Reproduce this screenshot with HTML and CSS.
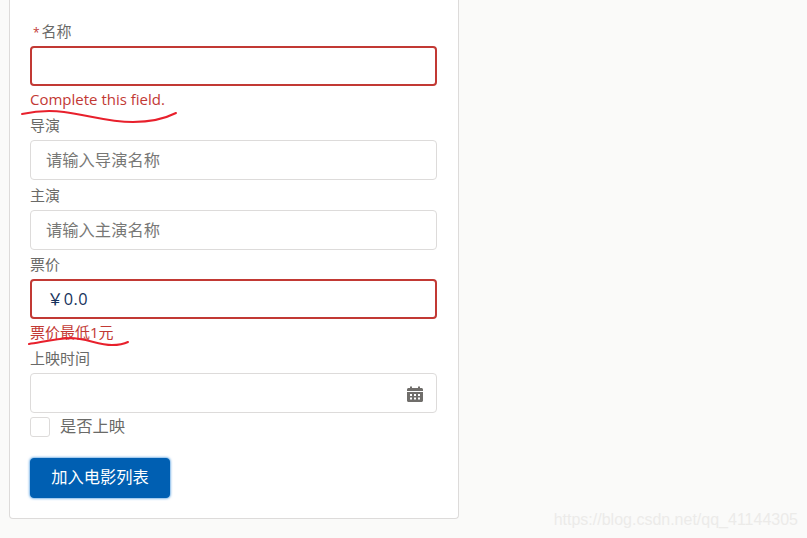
FILE: index.html

```html
<!DOCTYPE html>
<html lang="zh-CN">
<head>
    <meta charset="UTF-8">
    <title>加入电影列表</title>
    <link rel="stylesheet" href="styles.css">
</head>
<body>
    <div class="card">
        <form class="movie-form">
            <div class="field">
                <label class="field-label"><abbr class="required">*</abbr>名称</label>
                <input class="field-input has-error" type="text">
                <div class="field-error">Complete this field.</div>
            </div>
            <div class="field">
                <label class="field-label">导演</label>
                <input class="field-input" type="text" placeholder="请输入导演名称">
            </div>
            <div class="field">
                <label class="field-label">主演</label>
                <input class="field-input" type="text" placeholder="请输入主演名称">
            </div>
            <div class="field">
                <label class="field-label">票价</label>
                <input class="field-input has-error price-input" type="text" value="￥0.0">
                <div class="field-error">票价最低1元</div>
            </div>
            <div class="field date-field">
                <label class="field-label">上映时间</label>
                <div class="date-wrap">
                    <input class="field-input" type="text">
                    <svg class="calendar-icon" width="16" height="16" viewBox="0 0 16 16">
                        <path fill="#706e6b" d="M3 0.5h2v1.5h6V0.5h2v1.5h1.5c0.8 0 1.5 0.7 1.5 1.5V5H0V3.500C0 2.700 0.700 2 1.500 2H3z"/>
                        <path fill="#706e6b" fill-rule="evenodd" d="M0 6h16v8.500c0 0.800-0.700 1.500-1.500 1.500h-13C0.700 16 0 15.300 0 14.500z M3 8v2h2V8z M7 8v2h2V8z M11 8v2h2V8z M3 11.500v2h2v-2z M7 11.500v2h2v-2z M11 11.500v2h2v-2z"/>
                    </svg>
                </div>
            </div>
            <label class="check-row">
                <span class="check-box"></span>
                <span class="check-text">是否上映</span>
            </label>
            <button class="submit-btn" type="button">加入电影列表</button>
        </form>
    </div>

    <!-- hand drawn underlines on top of the screenshot -->
    <svg class="scribble" width="807" height="538" viewBox="0 0 807 538">
        <path d="M22 114C36 111 50 110 64 112C88 115 108 122 133 122C150 122 164 119 176 113" />
        <path d="M29 344C42 342 56 339 70 338C86 338 98 345 112 345C119 345 124 344 128 342" />
    </svg>

    <div class="watermark">https://blog.csdn.net/qq_41144305</div>
</body>
</html>
```

FILE: styles.css

```css
:root {
    --error-color: #c23934;
    --border-color: #dddbda;
    --text-color: #3e3e3c;
}

* {
    box-sizing: border-box;
}

html, body {
    height: 100%;
}

body {
    margin: 0;
    overflow: hidden;
    background-color: #fafaf9;
    color: var(--text-color);
    font-family: "Open Sans", "Noto Sans CJK SC", sans-serif;
}

.card {
    width: 450px;
    margin-left: 9px;
    padding: 22px 21px 20px 20px;
    background-color: white;
    border: 1px solid var(--border-color);
    border-top: none;
    border-radius: 0 0 4px 4px;
}

.field {
    margin-bottom: 5.5px;
}

.date-field {
    margin-bottom: 4px;
}

.field-label {
    display: block;
    height: 20px;
    margin-bottom: 4px;
    font-size: 15px;
    line-height: 19px;
    color: #6a6a68;
}

.required {
    margin: 0 2px 0 3px;
    color: var(--error-color);
    font-size: 12px;
}

.field-input {
    display: block;
    width: 100%;
    height: 40px;
    padding: 0 15px;
    background-color: white;
    border: 1px solid var(--border-color);
    border-radius: 4px;
    font-family: "Open Sans", "Noto Sans CJK SC", sans-serif;
    font-size: 16.3px;
    color: var(--text-color);
    outline: none;
}

.field-input::placeholder {
    color: #787876;
    opacity: 1;
}

.has-error {
    border: 2px solid var(--error-color);
}

.price-input {
    padding-left: 15px;
    padding-bottom: 2px;
    letter-spacing: 0.5px;
    color: #16325c;
}

.field-error {
    height: 24.5px;
    padding-top: 4.5px;
    font-size: 15px;
    line-height: 17px;
    color: var(--error-color);
}

.date-wrap {
    position: relative;
}

.calendar-icon {
    position: absolute;
    top: 13px;
    right: 14px;
}

.check-row {
    display: flex;
    align-items: center;
    gap: 10px;
    height: 20px;
    margin-bottom: 21px;
}

.check-box {
    width: 20px;
    height: 20px;
    background-color: white;
    border: 1px solid var(--border-color);
    border-radius: 3px;
}

.check-text {
    padding-bottom: 5px;
    font-size: 16.3px;
    color: #6a6a68;
}

.submit-btn {
    display: block;
    width: 140px;
    height: 40px;
    padding: 0 0 4px;
    background-color: #005fb2;
    border: 1px solid #005fb2;
    border-radius: 4px;
    box-shadow: 0 0 3px #0070d2;
    color: white;
    font-family: "Open Sans", "Noto Sans CJK SC", sans-serif;
    font-size: 16.3px;
}

.scribble {
    position: absolute;
    top: 0;
    left: 0;
    pointer-events: none;
}

.scribble path {
    fill: none;
    stroke: #e8202c;
    stroke-width: 2;
    stroke-linecap: round;
}

.watermark {
    position: absolute;
    top: 510px;
    right: 9px;
    font-family: "Liberation Sans", sans-serif;
    font-size: 16px;
    line-height: 20px;
    color: #ecebe9;
}
```
